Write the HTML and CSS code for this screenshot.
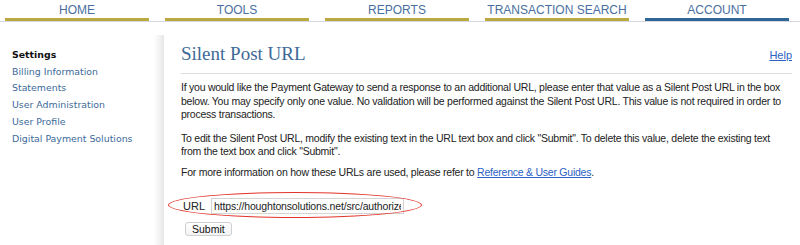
FILE: index.html
```html
<!DOCTYPE html>
<html>
<head>
<meta charset="utf-8">
<link rel="stylesheet" href="styles.css">
</head>
<body>
<nav class="topnav">
  <a class="tab">HOME</a>
  <a class="tab">TOOLS</a>
  <a class="tab">REPORTS</a>
  <a class="tab">TRANSACTION SEARCH</a>
  <a class="tab tab-active">ACCOUNT</a>
</nav>
<div class="main">
  <aside class="sidebar">
    <div class="side-title">Settings</div>
    <a class="side-link">Billing Information</a>
    <a class="side-link">Statements</a>
    <a class="side-link">User Administration</a>
    <a class="side-link">User Profile</a>
    <a class="side-link">Digital Payment Solutions</a>
  </aside>
  <section class="content">
    <div class="header">
      <h1 class="title">Silent Post URL</h1>
      <a class="help">Help</a>
    </div>
    <p class="para para-first">If you would like the Payment Gateway to send a response to an additional URL, please enter that value as a Silent Post URL in the box below. You may specify only one value. No validation will be performed against the Silent Post URL. This value is not required in order to process transactions.</p>
    <p class="para">To edit the Silent Post URL, modify the existing text in the URL text box and click "Submit". To delete this value, delete the existing text from the text box and click "Submit".</p>
    <p class="para">For more information on how these URLs are used, please refer to <a class="link">Reference &amp; User Guides</a>.</p>
    <form class="url-form">
      <div class="url-row">
        <label class="url-label">URL</label>
        <input class="url-input" type="text" value="https://houghtonsolutions.net/src/authorize">
        <div class="ellipse"></div>
      </div>
      <button class="submit" type="button">Submit</button>
    </form>
  </section>
</div>
</body>
</html>
```

FILE: styles.css
```css
html, body {
  margin: 0;
  padding: 0;
  background: #fff;
  width: 800px;
  height: 245px;
  overflow: hidden;
}

.topnav {
  display: flex;
  gap: 16px;
  padding-left: 5px;
  border-bottom: 1.5px solid #d6d6de;
  height: 21px;
}

.tab {
  width: 144px;
  box-sizing: border-box;
  text-align: center;
  font-family: "Liberation Sans", Arial, sans-serif;
  font-size: 12px;
  line-height: 14px;
  padding-top: 3px;
  color: #4a6f9e;
  border-bottom: 3px solid #b9a93f;
  height: 21px;
}

.tab-active {
  border-bottom-color: #2d6697;
}

.main {
  display: flex;
  margin-top: 13px;
}

.sidebar {
  width: 164px;
  flex: none;
  box-sizing: border-box;
  padding: 12px 0 0 12px;
  display: flex;
  flex-direction: column;
  min-height: 212px;
  background: linear-gradient(to right, #fff 0, #fff 154px, #f1f1f1 160px, #e6e6e6 164px);
  font-family: "DejaVu Sans", Verdana, sans-serif;
  font-size: 9.4px;
  line-height: 16.7px;
}

.side-title {
  font-weight: bold;
  color: #111;
}

.side-link {
  color: #3c6a9b;
}

.content {
  flex: 1;
  padding: 0 8px 0 17px;
  font-family: "Liberation Sans", Arial, sans-serif;
  font-size: 10.5px;
  letter-spacing: -0.24px;
  color: #222;
}

.header {
  display: flex;
  justify-content: space-between;
  align-items: center;
  border-bottom: 1px solid #dedede;
  padding: 7px 0 7px 0;
  letter-spacing: 0;
}

.title {
  margin: 0;
  font-family: "Liberation Serif", "Times New Roman", serif;
  font-weight: normal;
  font-size: 19px;
  line-height: 24px;
  color: #3e6a98;
}

.help {
  color: #2b62c4;
  text-decoration: underline;
  font-family: "Liberation Sans", Arial, sans-serif;
  font-size: 11px;
  margin-top: 2px;
}

.para {
  margin: 7px 0 7px 0;
  line-height: 13.5px;
}

.para-first {
  margin-bottom: 10px;
}

.link {
  color: #2b62c4;
  text-decoration: underline;
}

.url-form {
  margin-top: 18px;
}

.url-row {
  position: relative;
  display: flex;
  align-items: center;
  gap: 6px;
  padding-left: 2px;
  height: 17px;
}

.url-label {
  font-size: 11px;
  letter-spacing: 0;
  color: #222;
}

.url-input {
  width: 193px;
  height: 16px;
  box-sizing: border-box;
  border: 1px solid #d4d4d4;
  padding: 0 2px;
  font-family: "Liberation Sans", Arial, sans-serif;
  font-size: 10.5px;
  letter-spacing: -0.16px;
  color: #222;
  outline: none;
}

.ellipse {
  position: absolute;
  left: -13px;
  top: -5px;
  width: 252px;
  height: 24px;
  border: 1.5px solid #e2342b;
  border-radius: 50%;
  pointer-events: none;
}

.submit {
  margin: 8px 0 0 4px;
  height: 14px;
  padding: 0 6px;
  font-family: "Liberation Sans", Arial, sans-serif;
  font-size: 10.5px;
  line-height: 12px;
  letter-spacing: 0;
  color: #111;
  background: linear-gradient(#fff, #f3f3f3);
  border: 1px solid #cfcfcf;
  border-radius: 3px;
}
```
